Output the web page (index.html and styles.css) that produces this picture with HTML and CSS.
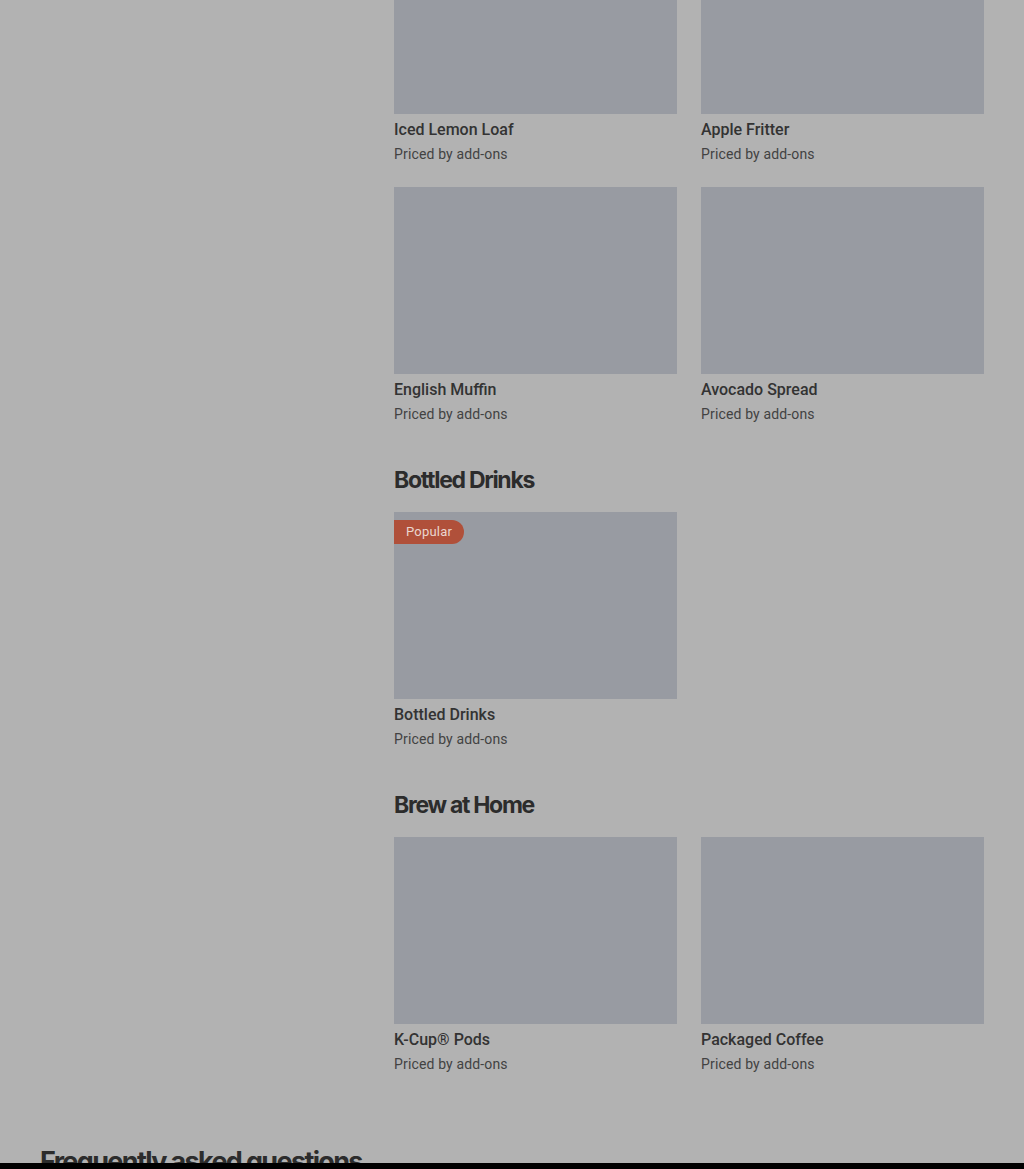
FILE: index.html
```html
<!DOCTYPE html>
<html lang="en">
<head>
    <meta charset="UTF-8">
    <meta name="viewport" content="width=device-width, initial-scale=1.0">
    <title>Menu</title>
    <link rel="stylesheet" href="styles.css">
</head>
<body>
    <div class="page">
        <div class="layout">
            <aside class="sidebar"></aside>

            <main class="menu">
                <!-- Bakery (scrolled) -->
                <section class="section section-first">
                    <div class="grid">
                        <div class="card">
                            <div class="thumb"></div>
                            <div class="item-name">Iced Lemon Loaf</div>
                            <div class="item-price">Priced by add-ons</div>
                        </div>
                        <div class="card">
                            <div class="thumb"></div>
                            <div class="item-name">Apple Fritter</div>
                            <div class="item-price">Priced by add-ons</div>
                        </div>
                        <div class="card">
                            <div class="thumb"></div>
                            <div class="item-name">English Muffin</div>
                            <div class="item-price">Priced by add-ons</div>
                        </div>
                        <div class="card">
                            <div class="thumb"></div>
                            <div class="item-name">Avocado Spread</div>
                            <div class="item-price">Priced by add-ons</div>
                        </div>
                    </div>
                </section>

                <section class="section">
                    <h2 class="section-title">Bottled Drinks</h2>
                    <div class="grid">
                        <div class="card">
                            <div class="thumb">
                                <span class="badge">Popular</span>
                            </div>
                            <div class="item-name">Bottled Drinks</div>
                            <div class="item-price">Priced by add-ons</div>
                        </div>
                    </div>
                </section>

                <section class="section">
                    <h2 class="section-title">Brew at Home</h2>
                    <div class="grid">
                        <div class="card">
                            <div class="thumb"></div>
                            <div class="item-name">K-Cup® Pods</div>
                            <div class="item-price">Priced by add-ons</div>
                        </div>
                        <div class="card">
                            <div class="thumb"></div>
                            <div class="item-name">Packaged Coffee</div>
                            <div class="item-price">Priced by add-ons</div>
                        </div>
                    </div>
                </section>
            </main>
        </div>

        <h2 class="faq-title">Frequently asked questions</h2>
    </div>

    <div class="bottom-sheet"></div>
</body>
</html>
```

FILE: styles.css
```css
body {
    margin: 0;
    padding: 0;
    background-color: #b2b2b2;
    color: #2b2b2b;
    font-family: Roboto, "Liberation Sans", sans-serif;
}
.page {
    padding: 0 40px;
    margin-top: -73px;
}
.layout {
    display: grid;
    grid-template-columns: 330px 590px;
    column-gap: 24px;
}
.section {
    padding-top: 40px;
}
.section-first {
    padding-top: 0;
}
.section-title {
    margin: 0 0 16px;
    font-family: Inter, "Liberation Sans", sans-serif;
    font-size: 23px;
    line-height: 32px;
    font-weight: 700;
    letter-spacing: -1.3px;
    color: #2c2c2c;
}
.grid {
    display: grid;
    grid-template-columns: 283px 283px;
    column-gap: 24px;
    row-gap: 23px;
}
.thumb {
    position: relative;
    height: 187px;
    background-color: #989ba2;
}
.badge {
    position: absolute;
    top: 8px;
    left: 0;
    height: 24px;
    line-height: 24px;
    padding: 0 12px 0 12px;
    background-color: #b0503a;
    color: #ead6cf;
    font-size: 13px;
    letter-spacing: 0.2px;
    border-radius: 0 12px 12px 0;
}
.item-name {
    margin-top: 4px;
    font-size: 16px;
    line-height: 24px;
    font-weight: 500;
    color: #333;
}
.item-price {
    margin-top: 2px;
    font-size: 14px;
    line-height: 20px;
    letter-spacing: 0.15px;
    color: #424242;
}
.faq-title {
    margin: 70px 0 0;
    font-family: Inter, "Liberation Sans", sans-serif;
    font-size: 27px;
    line-height: 36px;
    font-weight: 700;
    letter-spacing: -1.65px;
    color: #2c2c2c;
}
.bottom-sheet {
    position: fixed;
    left: 0;
    right: 0;
    bottom: 0;
    height: 6px;
    background-color: #000;
}
```
